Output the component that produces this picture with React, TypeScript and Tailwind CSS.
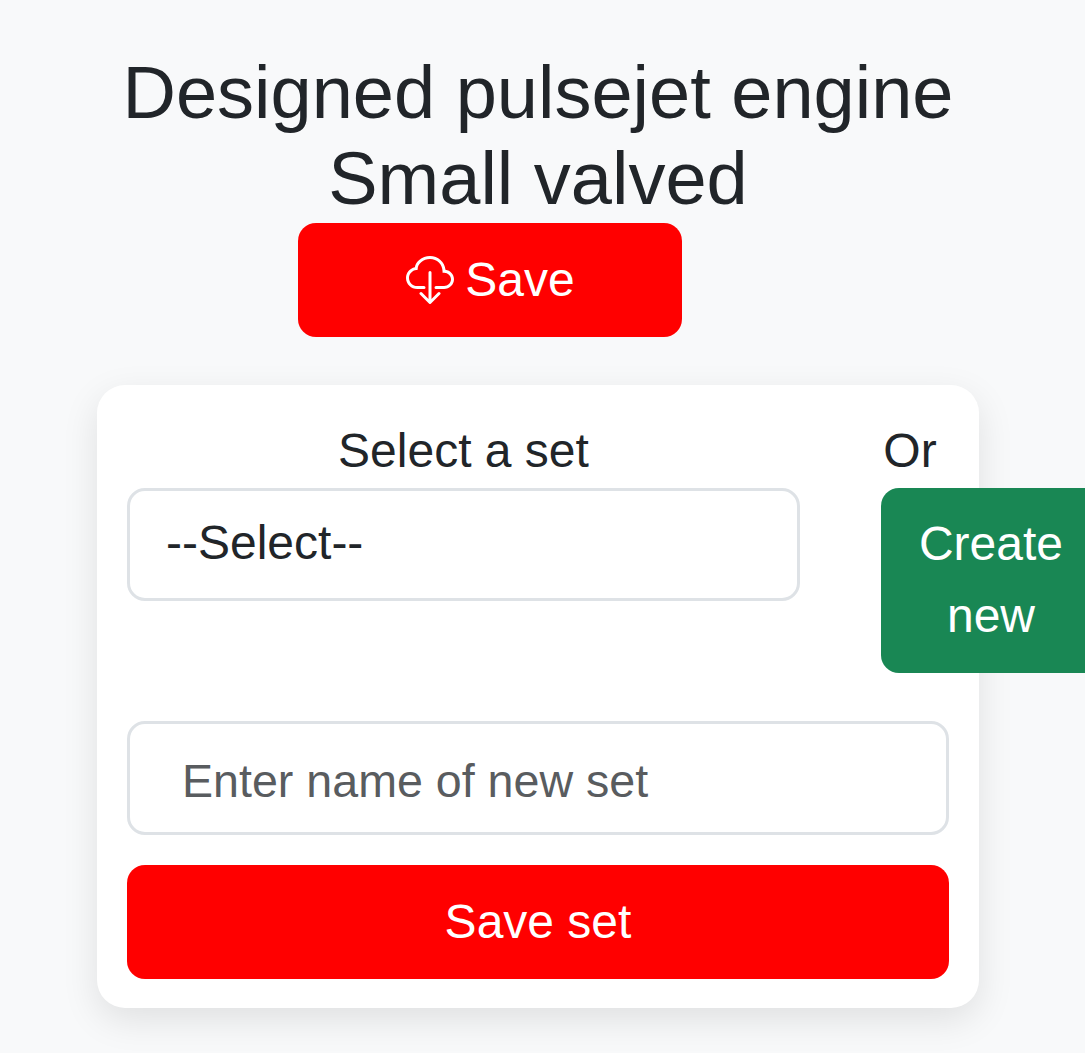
import { BsCloudDownload } from "react-icons/bs";

export default function App() {
  return (
    <div className="w-[1085px] h-[1053px] overflow-hidden bg-[#f8f9fa] font-['Liberation_Sans',Arial,sans-serif] text-[#212529]">
      <div className="w-[1076px] pt-[50px]">
        <h4 className="text-center text-[74px] leading-[86.4px] font-normal">
          <div>Designed pulsejet engine</div>
          <div>Small valved</div>
        </h4>
        <div className="pl-[298px]">
          <button className="flex h-[114px] w-[384px] items-center justify-center gap-[11px] rounded-[18px] bg-[#ff0000] pl-[1px] text-[48px] text-white">
            <BsCloudDownload className="h-[48px] w-[48px]" />
            <span>Save</span>
          </button>
        </div>
        <div className="ml-[97px] mt-[48px] w-[882px] rounded-[28px] bg-white px-[30px] pt-[30px] pb-[29px] shadow-[0_12px_36px_rgba(0,0,0,0.1)]">
          <div className="flex gap-[81px]">
            <div className="w-[673px]">
              <div className="h-[73px] text-center text-[48px] leading-[71px]">Select a set</div>
              <div className="h-[113px] rounded-[18px] border-[3px] border-[#dee2e6] pl-[36px] pt-[16px] text-[48px] leading-[72px]">--Select--</div>
            </div>
            <div className="w-[58px]">
              <div className="h-[73px] text-center text-[48px] leading-[71px]">Or</div>
              <button className="w-[220px] rounded-[18px] bg-[#198754] py-[20.5px] px-[36px] text-center text-[48px] leading-[72px] text-white">Create new</button>
            </div>
          </div>
          <div className="mt-[48px] flex h-[114px] items-center rounded-[18px] border-[3px] border-[#dee2e6] pl-[52px] pt-[8px] text-[46.6px] text-[#595c5f]">Enter name of new set</div>
          <button className="mt-[30px] h-[114px] w-full rounded-[18px] bg-[#ff0000] text-[48px] text-white">Save set</button>
        </div>
      </div>
    </div>
  );
}
